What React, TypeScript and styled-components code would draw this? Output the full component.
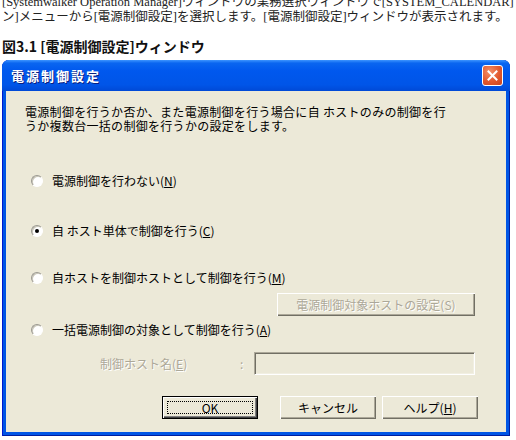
import styled, { createGlobalStyle } from 'styled-components'

const GlobalStyle = createGlobalStyle`
  html, body {
    margin: 0;
    padding: 0;
    background: #ffffff;
    overflow: hidden;
  }
`

const uiFont = `"Noto Sans CJK JP", "Liberation Sans", sans-serif`

const Page = styled.div`
  width: 516px;
  height: 440px;
  overflow: hidden;
  padding-left: 2px;
  box-sizing: border-box;
`

const Intro = styled.p`
  margin: -5px 0 0;
  font-family: "Liberation Serif", "Noto Sans CJK JP", serif;
  font-size: 12.5px;
  line-height: 15px;
  color: #222;
  white-space: nowrap;
`

const Caption = styled.h4`
  margin: 13px 0 0;
  font-family: ${uiFont};
  font-size: 14px;
  line-height: 16px;
  font-weight: 700;
  color: #111;
`

const Window = styled.section`
  margin-top: 6px;
  width: 508px;
  height: 376px;
  display: flex;
  flex-direction: column;
  border-radius: 7px 7px 0 0;
  background: #0055e5;
  overflow: hidden;
  box-sizing: border-box;
  padding: 0 4px 4px;
  box-shadow: inset 1px 0 0 #0019cf, inset -1px 0 0 #001ea0, inset 0 -1px 0 #001ea0;
`

const TitleBar = styled.header`
  height: 31px;
  margin: 0 -4px;
  padding: 0 7px 0 9px;
  display: flex;
  align-items: center;
  justify-content: space-between;
  background: linear-gradient(
    to bottom,
    #3d95ff 0%,
    #0a66f0 10%,
    #0058ee 35%,
    #0055e8 80%,
    #0049d6 100%
  );
`

const TitleText = styled.span`
  font-family: ${uiFont};
  font-size: 13px;
  font-weight: 700;
  letter-spacing: 2px;
  color: #ffffff;
  text-shadow: 1px 1px 0 #0a1e80;
`

const CloseButton = styled.button`
  width: 21px;
  height: 21px;
  padding: 0;
  border: 1px solid #ffffff;
  border-radius: 3px;
  background: radial-gradient(circle at 35% 30%, #f3906a 0%, #e2582e 55%, #c8431e 100%);
  display: flex;
  align-items: center;
  justify-content: center;
`

const Client = styled.div`
  flex: 1;
  background: #ece9d8;
  padding: 14px 28px 0 19px;
  display: flex;
  flex-direction: column;
  font-family: ${uiFont};
  font-size: 12px;
  color: #000;
`

const Description = styled.p`
  margin: 0;
  line-height: 14px;
  letter-spacing: 0.3px;
  white-space: nowrap;
`

const Option = styled.label<{ $gap: number }>`
  margin-top: ${(p) => p.$gap}px;
  height: 14px;
  display: flex;
  align-items: center;
  gap: 9px;
  padding-left: 6px;
  line-height: 14px;
`

const Radio = styled.span<{ $checked?: boolean }>`
  width: 12px;
  height: 12px;
  border-radius: 50%;
  background: #ffffff;
  box-sizing: border-box;
  border: 1px solid;
  border-color: #9a9890 #ffffff #ffffff #9a9890;
  box-shadow: inset 1px 1px 0 #c9c6b8;
  display: flex;
  align-items: center;
  justify-content: center;

  &::after {
    content: '';
    width: 4px;
    height: 4px;
    border-radius: 50%;
    background: ${(p) => (p.$checked ? '#000' : 'transparent')};
  }
`

const Key = styled.span`
  text-decoration: underline;
`

const SubRow = styled.div`
  margin-top: 8px;
  display: flex;
  justify-content: flex-end;
  padding-right: 3px;
`

const ClassicButton = styled.button<{ $width: number; $default?: boolean; $disabled?: boolean }>`
  width: ${(p) => p.$width}px;
  height: 23px;
  padding: 0;
  font-family: ${uiFont};
  font-size: 12px;
  line-height: 12px;
  background: #ece9d8;
  color: ${(p) => (p.$disabled ? '#aca899' : '#000')};
  text-shadow: ${(p) => (p.$disabled ? '1px 1px 0 #ffffff' : 'none')};
  box-sizing: border-box;
  border: ${(p) => (p.$default ? '1px solid #000' : '0')};
  box-shadow: ${(p) =>
    p.$default
      ? 'inset 1px 1px 0 #ffffff, inset -1px -1px 0 #404040, inset -2px -2px 0 #808080'
      : 'inset 1px 1px 0 #ffffff, inset -1px -1px 0 #716f64, inset -2px -2px 0 #aca899'};
  display: flex;
  align-items: center;
  justify-content: center;
`

const Focus = styled.span`
  width: calc(100% - 8px);
  height: calc(100% - 8px);
  border: 1px dotted #000;
  box-sizing: border-box;
  display: flex;
  align-items: center;
  justify-content: center;
`

const FieldRow = styled.div`
  margin-top: 15px;
  display: flex;
  align-items: center;
  color: #aca899;
  text-shadow: 1px 1px 0 #ffffff;
`

const FieldLabel = styled.span`
  margin-left: 75px;
  width: 140px;
`

const Colon = styled.span`
  width: 14px;
`

const Field = styled.div`
  width: 221px;
  height: 23px;
  box-sizing: border-box;
  border: 1px solid;
  border-color: #aca899 #ffffff #ffffff #aca899;
  box-shadow: inset 1px 1px 0 #716f64, inset -1px -1px 0 #f1efe2;
`

const ButtonRow = styled.div`
  margin-top: 21px;
  display: flex;
  justify-content: flex-end;
  gap: 6px;
`

const PrimarySlot = styled.div`
  margin-right: 16px;
`

export default function App() {
  return (
    <Page>
      <GlobalStyle />
      <Intro>
        [Systemwalker Operation Manager]ウィンドウの業務選択ウィンドウで[SYSTEM_CALENDAR]
        <br />
        ン]メニューから[電源制御設定]を選択します。[電源制御設定]ウィンドウが表示されます。
      </Intro>
      <Caption>図3.1 [電源制御設定]ウィンドウ</Caption>
      <Window>
        <TitleBar>
          <TitleText>電源制御設定</TitleText>
          <CloseButton aria-label="閉じる">
            <svg width="11" height="11" viewBox="0 0 11 11">
              <path d="M1.5 1.5 L9.5 9.5 M9.5 1.5 L1.5 9.5" stroke="#ffffff" strokeWidth="2" strokeLinecap="square" />
            </svg>
          </CloseButton>
        </TitleBar>
        <Client>
          <Description>
            電源制御を行うか否か、また電源制御を行う場合に自 ホストのみの制御を行
            <br />
            うか複数台一括の制御を行うかの設定をします。
          </Description>
          <Option $gap={41}>
            <Radio />
            <span>
              電源制御を行わない(<Key>N</Key>)
            </span>
          </Option>
          <Option $gap={36}>
            <Radio $checked />
            <span>
              自 ホスト単体で制御を行う(<Key>C</Key>)
            </span>
          </Option>
          <Option $gap={33}>
            <Radio />
            <span>
              自ホストを制御ホストとして制御を行う(<Key>M</Key>)
            </span>
          </Option>
          <SubRow>
            <ClassicButton $width={198} $disabled>
              電源制御対象ホストの設定(S)
            </ClassicButton>
          </SubRow>
          <Option $gap={7}>
            <Radio />
            <span>
              一括電源制御の対象として制御を行う(<Key>A</Key>)
            </span>
          </Option>
          <FieldRow>
            <FieldLabel>
              制御ホスト名(<Key>E</Key>)
            </FieldLabel>
            <Colon>:</Colon>
            <Field />
          </FieldRow>
          <ButtonRow>
            <PrimarySlot>
              <ClassicButton $width={96} $default>
                <Focus>OK</Focus>
              </ClassicButton>
            </PrimarySlot>
            <ClassicButton $width={96}>キャンセル</ClassicButton>
            <ClassicButton $width={96}>
              ヘルプ(<Key>H</Key>)
            </ClassicButton>
          </ButtonRow>
        </Client>
      </Window>
    </Page>
  )
}
